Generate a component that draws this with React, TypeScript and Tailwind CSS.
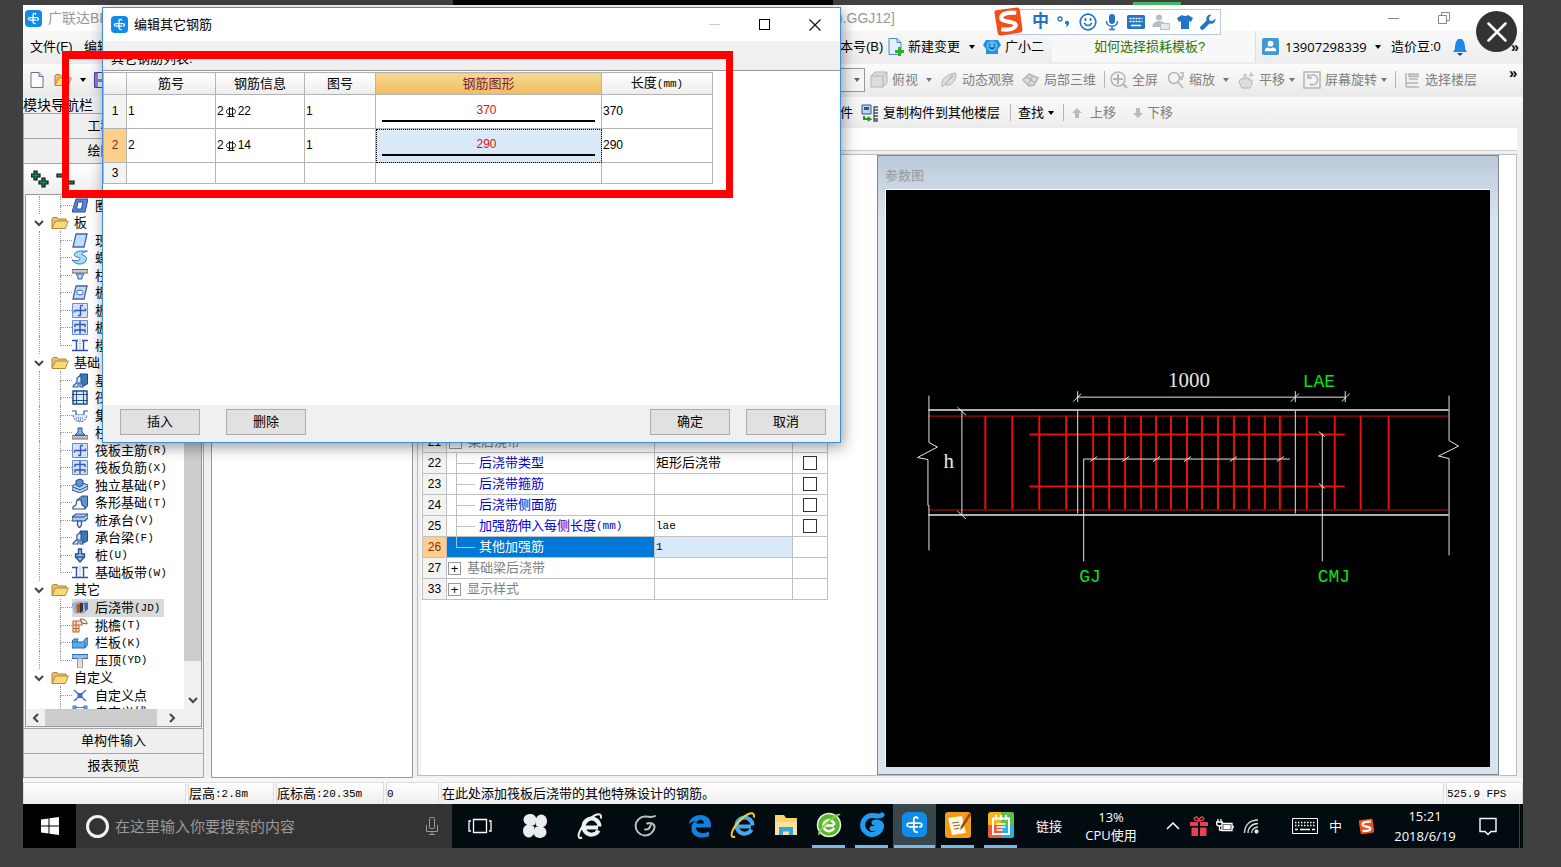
import type { ReactNode } from 'react';

type TreeNode = { label: string; hotkey?: string; icon?: string; group?: boolean; selected?: boolean };

const tree: TreeNode[] = [
  { label: '圈梁', hotkey: '(E)', icon: 'ring' },
  { label: '板', group: true },
  { label: '现浇板', hotkey: '(B)', icon: 'slab' },
  { label: '螺旋板', hotkey: '(B)', icon: 'spiral' },
  { label: '柱帽', hotkey: '(V)', icon: 'cap' },
  { label: '板洞', hotkey: '(N)', icon: 'hole' },
  { label: '板受力筋', hotkey: '(S)', icon: 'mainbar' },
  { label: '板负筋', hotkey: '(F)', icon: 'negbar' },
  { label: '楼层板带', hotkey: '(H)', icon: 'strip' },
  { label: '基础', group: true },
  { label: '基础梁', hotkey: '(F)', icon: 'beam' },
  { label: '筏板基础', hotkey: '(M)', icon: 'raft' },
  { label: '集水坑', hotkey: '(K)', icon: 'pit' },
  { label: '柱墩', hotkey: '(Y)', icon: 'pier' },
  { label: '筏板主筋', hotkey: '(R)', icon: 'mainbar' },
  { label: '筏板负筋', hotkey: '(X)', icon: 'negbar' },
  { label: '独立基础', hotkey: '(P)', icon: 'footing' },
  { label: '条形基础', hotkey: '(T)', icon: 'stripfoot' },
  { label: '桩承台', hotkey: '(V)', icon: 'pilecap' },
  { label: '承台梁', hotkey: '(F)', icon: 'beam' },
  { label: '桩', hotkey: '(U)', icon: 'pile' },
  { label: '基础板带', hotkey: '(W)', icon: 'strip' },
  { label: '其它', group: true },
  { label: '后浇带', hotkey: '(JD)', icon: 'pour', selected: true },
  { label: '挑檐', hotkey: '(T)', icon: 'eave' },
  { label: '栏板', hotkey: '(K)', icon: 'rail' },
  { label: '压顶', hotkey: '(YD)', icon: 'coping' },
  { label: '自定义', group: true },
  { label: '自定义点', icon: 'point' },
  { label: '自定义线', icon: 'line' },
];

const lastLeaf = [8, 21, 26];

const bars = [
  { id: 1, no: '1', size: '22', fig: '1', len: '370' },
  { id: 2, no: '2', size: '14', fig: '1', len: '290' },
];

const props = [
  { id: 22, name: '后浇带类型', value: '矩形后浇带' },
  { id: 23, name: '后浇带箍筋', value: '' },
  { id: 24, name: '后浇带侧面筋', value: '' },
  { id: 25, name: '加强筋伸入每侧长度', unit: '(mm)', value: 'lae' },
];

const stirrups = [985, 1012, 1039, 1066, 1093, 1109, 1125, 1141, 1156, 1171, 1187, 1202, 1218, 1234, 1249, 1265, 1280, 1307, 1335, 1361, 1389];

const mono = "font-['Liberation_Mono','Noto_Sans_CJK_SC',monospace] text-[11px]";

function GlodonIcon({ className = 'size-[17px]' }: { className?: string }) {
  return (
    <svg viewBox="0 0 18 18" className={className}>
      <rect width="18" height="18" rx="4" fill="#128be8" />
      <path d="M11.300 4.500C10.500 3 8.500 3.500 8.500 5.200v7c0 1.600 1 2.300 2.300 2.300M4.200 10.300c-1.200-1.300-.3-2.300 1.300-2.300h7c2.300 0 2.300 2.700.3 2.700M5.500 10.700h5.500" fill="none" stroke="#fff" strokeWidth="1.300" strokeLinecap="round" />
    </svg>
  );
}

function Folder() {
  return (
    <svg viewBox="0 0 18 14" className="h-[14px] w-[18px] shrink-0">
      <path d="M1 12V2.500L2 1.500h4l1.200 1.500H15V6" fill="#e9c36b" stroke="#a9853b" />
      <path d="M1 12.500 4.500 5H17.300l-3 7.500Z" fill="#fbd978" stroke="#b48a35" />
    </svg>
  );
}

function Leaf({ kind }: { kind: string }) {
  const shapes: Record<string, ReactNode> = {
    ring: <path fillRule="evenodd" d="M4 1h12l-3 13H0ZM6 4 4.500 11h5L11 4Z" fill="#5d84dc" stroke="#274a9c" />,
    slab: <path d="M4 1h11l-3 13H1Z" fill="#c3dcfb" stroke="#3f63b5" strokeWidth="1.300" />,
    spiral: <path d="M15.500 1H9C4 1 1 4 3 6s6 1 5 3-4 2-8 1c4 5 10 5 13 2s1-6-2-7-1-2 4.500-4Z" fill="#a6dcfa" stroke="#2c78c6" />,
    cap: <><path d="M0 1.500h16v3.500H0Z" fill="#ccc" stroke="#666" /><path d="M4 6h8l-2 3v2H6V9Z" fill="#b8d4fa" stroke="#2e5bb8" /></>,
    hole: <><path d="M4 1h11l-3 13H1Z" fill="#c3dcfb" stroke="#3f63b5" strokeWidth="1.300" /><ellipse cx="8" cy="7.500" rx="3.300" ry="2.400" fill="#eef6ff" stroke="#3f63b5" /></>,
    mainbar: <><path d="M.5.5h15v14H.5Z" fill="#d3e2fb" stroke="#6c8bd4" /><path d="M8.500 2.500v10H6M8.500 2.500H11M2.500 7.500h11V5.500M2.500 7.500v2" fill="none" stroke="#3458b4" strokeWidth="1.400" /></>,
    negbar: <><path d="M.5.5h15v14H.5Z" fill="#d3e2fb" stroke="#6c8bd4" /><path d="M8 1v13M3 7V4.500h10V7M3 12.500V10h10v2.500" fill="none" stroke="#3458b4" strokeWidth="1.400" /></>,
    strip: <><path d="M0 2.500h6M10 2.500h6M0 12.500h16" stroke="#2c50b0" strokeWidth="1.600" /><path d="M4.500 2.500v10M11.500 2.500v10" stroke="#3458b4" strokeWidth="1.500" /><path d="M8 1v12" stroke="#777" strokeDasharray="1 1" /></>,
    beam: <><path d="M8 1h7.500v10L9 14Z" fill="#3c79b4" stroke="#1f4c80" /><path d="M1 14c0-3 3-2 4-5V5l4-3v7l2 5H8v-4H6v4Z" fill="#dceafb" stroke="#2a5aa8" strokeWidth="1.200" /></>,
    raft: <><path d="M1 1h14v13H1Z" fill="#dceafb" stroke="#24508f" strokeWidth="1.500" /><path d="M4.500 4.500h7v6h-7ZM4.500 0v15M11.500 0v15M0 4.500h16M0 10.500h16" fill="none" stroke="#24508f" /></>,
    pit: <><path d="M0 3h4v4h8V3h4" fill="none" stroke="#3458b4" strokeWidth="1.200" /><path d="M1 7c1 9 13 9 14 0" fill="#dceafb" stroke="#3458b4" strokeDasharray="2 1" /><path d="M4 10h8M6 12h4" stroke="#3458b4" strokeDasharray="1 1" /></>,
    pier: <><path d="M0 10.500h16V14H0Z" fill="#bbb" stroke="#777" /><path d="M6 3h4v4l3 3H3l3-3Z" fill="#86b1ee" stroke="#24508f" /></>,
    footing: <><path d="M0 8 8 4l8 3v4l-8 4-8-3Z" fill="#b7d5f7" stroke="#24508f" /><path d="M4 2.500 8 1l3 1.500V7L7.500 9 4 7Z" fill="#5c93d6" stroke="#24508f" /><path d="m1 9 7 3 8-4" fill="none" stroke="#24508f" /></>,
    stripfoot: <><path d="M5 5 10 1h5.500v10L13 14Z" fill="#5d94cf" stroke="#24508f" /><path d="M1 14v-2l3-2 1-5h4l1 5 3 2v2Z" fill="#f4f9ff" stroke="#24508f" strokeWidth="1.200" /></>,
    pilecap: <><path d="m0 4 4-3h12v4l-3 3H0Z" fill="#a6c9f3" stroke="#24508f" strokeWidth="1.200" /><path d="M0 4h12l4-3" fill="none" stroke="#24508f" /><path d="M5.500 8h4v4l-2 3-2-3Z" fill="#dceafb" stroke="#24508f" strokeWidth="1.200" /></>,
    pile: <path d="M6.500 1h3v5h3v3l-4.500 5L3.500 9V6h3ZM3.500 9h9" fill="#9dc3ee" stroke="#24508f" strokeWidth="1.400" />,
    pour: <><path d="m0 4 6-2h10v7l-4 4H3Z" fill="#9db8dd" stroke="#7a94bd" strokeWidth=".6" /><path d="M4 5 8 3v9l-3 1Z" fill="#b35a28" /><path d="M8 3h3v8l-3 2Z" fill="#402c28" /><path d="M12 3h4v6l-3 2Z" fill="#4168ad" /></>,
    eave: <><path d="M1 3h9v4H7v7H1ZM1 7h6M1 10.500h6M4 3v11" fill="#fde1cc" stroke="#c06235" strokeWidth="1.100" /><path d="M8 1c4 0 7 1 7 5l-5-1Z" fill="#fbe9dd" stroke="#7a5a48" /></>,
    rail: <path d="M0 6 2 4h4l-1 3h6l3-4h2v6l-3 4H0ZM0 7h5M13 13V7" fill="#5eabe6" stroke="#206aae" />,
    coping: <><path d="M0 1.500h16v4H0Z" fill="#93bdf3" stroke="#3366b5" /><path d="M5.500 5.500h5V15h-5Z" fill="#ddd" stroke="#999" /></>,
    point: <><path d="m2 2 12 11M14 2 2 13" stroke="#3f6fc0" strokeWidth="1.400" /><path d="M5.500 5h5v5h-5Z" fill="#3f6fc0" /></>,
    line: <path d="M1 1h3v3H1ZM12 1h3v3h-3ZM4 2.500h8" fill="#8db5ec" stroke="#3f6fc0" />,
  };
  return <svg viewBox="0 0 16 15" className="h-[15px] w-4 shrink-0">{shapes[kind]}</svg>;
}

function Caret({ className = 'text-black' }: { className?: string }) {
  return (
    <svg viewBox="0 0 6 4" className={`h-1 w-1.5 shrink-0 ${className}`}>
      <path d="M0 0h6L3 4Z" fill="currentColor" />
    </svg>
  );
}

function Chevron({ dir }: { dir: 'down' | 'left' | 'right' }) {
  const d = { down: 'm1 3 4 4 4-4', left: 'M7 1 3 5l4 4', right: 'm3 1 4 4-4 4' }[dir];
  return (
    <svg viewBox="0 0 10 10" className="size-2.5 shrink-0">
      <path d={d} fill="none" stroke="#444" strokeWidth="2" />
    </svg>
  );
}

function SogouIcon({ className }: { className: string }) {
  return (
    <svg viewBox="0 0 30 30" className={className}>
      <path d="M3 4Q1 4 1.500 7l3 19q.5 3 3 2.500l18-2.500q3-.5 3-3L26 4q-.5-3-3-2.500Z" fill="#f04f1b" />
      <path d="M22.500 6.500C12 6 8 8 8 11.500c0 4.500 14 3 14 7 0 3.500-7 5-14 4" fill="none" stroke="#fff" strokeWidth="4" />
    </svg>
  );
}

type ToolProps = { label: string; width: string; icon: ReactNode; caret?: boolean };

function Tool({ label, width, icon, caret }: ToolProps) {
  return (
    <button className={`flex shrink-0 items-center gap-1 whitespace-nowrap text-[#808080] ${width}`}>
      <svg viewBox="0 0 18 18" className="size-[18px] shrink-0" fill="#ddd" stroke="#b5b5b5">{icon}</svg>
      {label}
      {caret && <span className="ml-auto pr-2"><Caret className="text-[#777]" /></span>}
    </button>
  );
}

const Divider = () => <span className="h-[17px] w-px shrink-0 bg-[#b5b5b5]" />;

function ImeBar() {
  return (
    <div className="absolute top-1 left-[979px] z-10 flex h-[26px] w-[219px] items-center justify-end gap-[7px] border border-[#b9c7e0] bg-white pr-1 text-[#2274c4]">
      <SogouIcon className="absolute -top-1 -left-2.5 size-[31px]" />
      <span className="text-[17px] font-bold">中</span>
      <svg viewBox="0 0 16 16" className="size-4" fill="currentColor">
        <circle cx="4" cy="5" r="2" fill="none" stroke="currentColor" strokeWidth="1.300" />
        <path d="M9 8.500a2 2 0 1 1 4 .5q0 3-3.500 4 1.500-1.500 1-2.500Q9 10.500 9 8.500Z" />
      </svg>
      <svg viewBox="0 0 18 18" className="size-[18px]" fill="none" stroke="currentColor" strokeWidth="1.700">
        <circle cx="9" cy="9" r="7.800" />
        <path d="M5 10q4 5 8 0M6.500 5v3M11.500 5v3" />
      </svg>
      <svg viewBox="0 0 16 18" className="h-[18px] w-4">
        <rect x="5" y="1" width="6" height="10" rx="3" fill="currentColor" />
        <path d="M2.500 8c0 7 11 7 11 0M8 13v3.500M5 16.500h6" fill="none" stroke="currentColor" strokeWidth="1.500" />
      </svg>
      <svg viewBox="0 0 18 14" className="h-3.5 w-[18px]">
        <rect width="18" height="14" rx="1.500" fill="currentColor" />
        <path d="M2.500 3.500h13M2.500 6.500h13" stroke="#fff" strokeWidth="1.600" strokeDasharray="2 1" />
        <path d="M4 10.500h10" stroke="#fff" strokeWidth="1.600" />
      </svg>
      <svg viewBox="0 0 18 16" className="h-4 w-[18px]">
        <circle cx="7" cy="3.500" r="3" fill="#b3bcc9" />
        <path d="M0 13q1-6 7-6 4 0 5 2H8v4Z" fill="#b3bcc9" />
        <path d="M8.500 9.500h9v6h-9Z" fill="#e6eaf0" stroke="#b3bcc9" />
      </svg>
      <svg viewBox="0 0 16 16" className="size-4" fill="currentColor">
        <path d="M5 1q3 2 6 0l5 3-2 4-2-1v8H4V7L2 8 0 4Z" />
      </svg>
      <svg viewBox="0 0 16 16" className="size-4" fill="currentColor">
        <path d="M15.500 4.500 12.500 7 9.500 6.500 9 3.500 11.500.5C8 0 5.500 3 6.500 6.500L.8 12.200a1.900 1.900 0 0 0 3 3L9.500 9.500c3.500 1 6.500-1.500 6-5Z" />
      </svg>
    </div>
  );
}

function Sidebar() {
  const wide = 'h-[25px] w-full border-b border-[#a5a5a5] bg-[#efefef] text-center';
  return (
    <aside className="flex w-[181px] shrink-0 flex-col bg-[#f0f0f0]">
      <h2 className="h-4 text-[14px] leading-4">模块导航栏</h2>
      <div className="flex min-h-0 flex-1 flex-col border border-[#a5a5a5]">
        <button className={wide}>工程设置</button>
        <button className={wide}>绘图输入</button>
        <div className="flex h-[30px] items-center bg-linear-to-b from-white to-[#eee] pl-[7px]">
          <svg viewBox="0 0 44 18" className="h-[18px] w-11">
            <path d="M0 4h3V1h3v3h3v3H6v3H3V7H0ZM8 11h3V8h3v3h3v3h-3v3h-3v-3H8ZM26 4h8v3h-8ZM34 11h9v3h-9Z" fill="#0b8a62" stroke="#111" strokeWidth="1.200" />
          </svg>
        </div>
        <div className="mx-px flex min-h-0 flex-1 flex-col border border-[#999] bg-white">
          <div className="flex min-h-0 flex-1">
            <ul className="min-w-0 flex-1 overflow-hidden pt-px">
              {tree.map((node, i) => (
                <li key={i} className="flex h-[18px] items-center whitespace-nowrap even:h-[17px]">
                  {node.group ? (
                    <button className="flex items-center pl-2">
                      <Chevron dir="down" />
                      <span className="w-[7px]" />
                      <Folder />
                      <span className="pl-[5px]">{node.label}</span>
                    </button>
                  ) : (
                    <>
                      <span className={`ml-[13px] w-[21px] shrink-0 self-stretch ${i < 27 ? 'border-l border-dotted border-[#999]' : ''}`} />
                      <span className="flex w-3 shrink-0 flex-col self-stretch">
                        <span className="flex-1 border-b border-l border-dotted border-[#999]" />
                        <span className={`flex-1 ${lastLeaf.includes(i) ? '' : 'border-l border-dotted border-[#999]'}`} />
                      </span>
                      <button className={`flex items-center pr-1 ${node.selected ? 'bg-[#d9d9d9]' : ''}`}>
                        <Leaf kind={node.icon!} />
                        <span className="pl-[7px] leading-[17px]">{node.label}</span>
                        <span className={mono}>{node.hotkey}</span>
                      </button>
                    </>
                  )}
                </li>
              ))}
            </ul>
            <div className="flex w-[17px] flex-col items-center bg-[#f0f0f0]">
              <span className="h-[466px] w-full bg-[#cdcdcd]" />
              <span className="mt-auto pb-1"><Chevron dir="down" /></span>
            </div>
          </div>
          <div className="flex h-[17px] items-center bg-[#f0f0f0] pl-[5px]">
            <Chevron dir="left" />
            <span className="mr-2.5 ml-1 h-full w-28 bg-[#cdcdcd]" />
            <Chevron dir="right" />
          </div>
        </div>
        <div className="h-0.5 border-b border-[#a5a5a5]" />
        <button className={wide}>单构件输入</button>
        <button className="h-[23px] bg-[#efefef]">报表预览</button>
      </div>
    </aside>
  );
}

function PropertyTable() {
  const cell = 'border border-[#c0c0c0] p-0';
  return (
    <table className="w-[406px] table-fixed border-collapse leading-5">
      <colgroup>
        <col className="w-6" />
        <col />
        <col className="w-[138px]" />
        <col className="w-[35px]" />
      </colgroup>
      <tbody>
        <tr className="h-[21px] text-[#808080]">
          <td className={`${cell} bg-[#f3f3f3] text-center text-[12px] text-black`}>21</td>
          <td className={cell}>
            <span className="flex items-center gap-1.5 pl-0.5"><span className="size-[13px] border border-[#999] text-center text-[13px] leading-[11px]">−</span>梁后浇带</span>
          </td>
          <td className={cell} />
          <td className={cell} />
        </tr>
        {props.map((p) => (
          <tr key={p.id} className="h-[21px]">
            <td className={`${cell} bg-[#f3f3f3] text-center text-[12px]`}>{p.id}</td>
            <td className={`${cell} whitespace-nowrap text-[#0000d0]`}>
              <label htmlFor={`p${p.id}`} className="flex h-5 items-center pl-[9px]">
                <span className="h-full w-0 border-l border-[#c0c0c0]" />
                <span className="mr-1 h-px w-[18px] bg-[#c0c0c0]" />
                {p.name}
                <span className={mono}>{p.unit}</span>
              </label>
            </td>
            <td className={`${cell} pl-px ${p.value === 'lae' ? mono : ''}`}>{p.value}</td>
            <td className={`${cell} text-center`}>
              <input id={`p${p.id}`} type="checkbox" className="mx-auto block size-3.5 appearance-none border border-[#333] bg-white" />
            </td>
          </tr>
        ))}
        <tr className="h-[21px]">
          <td className={`${cell} bg-[#fdcf8b] text-center text-[12px] text-[#8a2a1a]`}>26</td>
          <td className={`${cell} bg-[#0078d7] text-white`}>
            <span className="flex h-5 items-center pl-[9px]">
              <span className="mr-1 h-[11px] w-[19px] self-start border-b border-l border-[#9cc9ee]" />
              其他加强筋
            </span>
          </td>
          <td className={`${cell} bg-[#d9e9f7] pl-px ${mono}`}>1</td>
          <td className={cell} />
        </tr>
        {[{ id: 27, name: '基础梁后浇带' }, { id: 33, name: '显示样式' }].map((g) => (
          <tr key={g.id} className="h-[21px] text-[#808080]">
            <td className={`${cell} bg-[#f3f3f3] text-center text-[12px] text-black`}>{g.id}</td>
            <td className={cell}>
              <span className="flex h-5 items-center gap-1.5 pl-px">
                <button className="size-[13px] border border-[#999] text-center text-[13px] leading-[11px] text-black">+</button>
                {g.name}
              </span>
            </td>
            <td className={cell} />
            <td className={cell} />
          </tr>
        ))}
      </tbody>
    </table>
  );
}

function RebarDrawing() {
  return (
    <svg viewBox="887 189 602 578" className="min-h-0 w-full flex-1 border-t border-l border-white bg-black" fill="none">
      <g stroke="#e8100c" strokeWidth="2">
        {stirrups.map((x) => <path key={x} d={`M${x} 415V509`} />)}
        <path d="M1029 434H1345M1029 486H1345" />
        <path d="M928 415.500H1449M928 509.500H1449" stroke="#c80e0a" strokeWidth="1" />
      </g>
      <g stroke="#e6e6e6" strokeWidth="1">
        <path d="M928 409.500H1449M928 514.500H1449" strokeWidth="1.500" />
        <path d="M928.500 395V442L937 446.500 917 457 927.500 459V505H928.500V550" />
        <path d="M1449.500 395V440L1459 445.500 1439 455.500 1449.500 458V555" />
        <path d="M961.500 410V514M957 406.500l8.500 8M957 510.500l8.500 8" />
        <path d="M1077.500 410V513M1295.500 410V513" />
        <path d="M1077 396.500H1346M1077.500 390.500v11M1295.500 390.500v11M1345.500 390.500v11M1073 401l8-8M1291 401l8-8M1342 401l8-8" />
        <path d="M1083.500 561V458.500H1290" />
        {[1093, 1125, 1156, 1187, 1233, 1280].map((x) => <path key={x} d={`M${x - 3} 461l7-5`} />)}
        <path d="M1322.500 433V561M1319 431l6 5M1319 483l6 5" />
      </g>
      <g fill="#e6e6e6" className="font-['Liberation_Serif',serif] text-[21px]">
        <text x="1168" y="386">1000</text>
        <text x="943" y="467">h</text>
      </g>
      <g fill="#0ce01c" className="font-['Liberation_Mono',monospace] text-[18px]">
        <text x="1303" y="386">LAE</text>
        <text x="1079" y="582">GJ</text>
        <text x="1318" y="582">CMJ</text>
      </g>
    </svg>
  );
}

function RebarDialog() {
  const cell = 'border border-[#b4b4b4] px-px py-0';
  const head = 'border border-[#b4b4b4] bg-linear-to-b from-white to-[#ececec] p-0 font-normal';
  const btn = 'h-[26px] w-20 border border-[#adadad] bg-[#e1e1e1]';
  return (
    <section role="dialog" aria-label="编辑其它钢筋" className="absolute top-0.5 left-[79px] z-20 flex w-[739px] flex-col border border-[#3c8fdc] bg-white shadow-[2px_4px_14px_rgba(0,0,0,0.4)]">
      <header className="flex h-[33px] items-center pl-2">
        <GlodonIcon />
        <span className="pl-1.5">编辑其它钢筋</span>
        <div className="ml-auto flex items-center gap-[39px] pr-[19px]">
          <button aria-label="最小化" className="h-px w-[11px] bg-[#ccc]" />
          <button aria-label="最大化" className="size-[11px] border border-black" />
          <button aria-label="关闭">
            <svg viewBox="0 0 12 12" className="size-3"><path d="m.5.5 11 11M11.500.5l-11 11" stroke="#111" strokeWidth="1.200" /></svg>
          </button>
        </div>
      </header>
      <h3 className="h-[30px] border-b border-[#999] bg-[#f0f0f0] pt-[9px] pl-2 leading-[18px]">其它钢筋列表:</h3>
      <div className="h-[334px] pt-px">
        <table className="w-[610px] table-fixed border-collapse leading-[19px]">
          <colgroup>
            <col className="w-[23px]" />
            <col className="w-[89px]" />
            <col className="w-[89px]" />
            <col className="w-[71px]" />
            <col />
            <col className="w-[111px]" />
          </colgroup>
          <thead>
            <tr className="h-[21px]">
              <th className={head} />
              <th className={head}>筋号</th>
              <th className={head}>钢筋信息</th>
              <th className={head}>图号</th>
              <th className="border border-[#b4b4b4] bg-linear-to-b from-[#f8d790] to-[#efbd60] p-0 font-normal text-[#7a1f3a]">钢筋图形</th>
              <th className={head}>长度<span className={mono}>(mm)</span></th>
            </tr>
          </thead>
          <tbody className="text-[12px]">
            {bars.map((b) => (
              <tr key={b.id} className="h-[34px]">
                <td className={`border border-[#b4b4b4] p-0 text-center ${b.id === 2 ? 'bg-[#fdcf8b] text-[#8a2a1a]' : 'bg-[#f3f3f3]'}`}>{b.id}</td>
                <td className={cell}>{b.no}</td>
                <td className={cell}>
                  <span className="flex items-center">
                    2
                    <svg viewBox="0 0 14 12" className="h-3 w-3.5"><path d="M5.500 1v10M8.500 1v10M3.500 10.500h7" stroke="#111" /><ellipse cx="7" cy="5.500" rx="4.500" ry="2.800" fill="none" stroke="#111" /></svg>
                    {b.size}
                  </span>
                </td>
                <td className={cell}>{b.fig}</td>
                <td className={`border border-[#b4b4b4] p-0 ${b.id === 2 ? 'bg-[#d9e9f7] outline-1 -outline-offset-1 outline-dotted outline-black' : ''}`}>
                  <div className="mx-1.5 border-b-2 border-black pr-1 text-center text-[#e01020]">{b.len}</div>
                </td>
                <td className={cell}>{b.len}</td>
              </tr>
            ))}
            <tr className="h-[21px]">
              <td className="border border-[#b4b4b4] bg-[#f3f3f3] p-0 text-center">3</td>
              <td className={cell} />
              <td className={cell} />
              <td className={cell} />
              <td className={cell} />
              <td className={cell} />
            </tr>
          </tbody>
        </table>
      </div>
      <footer className="flex h-[37px] items-center bg-[#f0f0f0] pr-3.5 pb-1 pl-[17px]">
        <button className={btn}>插入</button>
        <button className={`${btn} ml-[26px]`}>删除</button>
        <button className={`${btn} mr-4 ml-auto`}>确定</button>
        <button className={btn}>取消</button>
      </footer>
    </section>
  );
}

function IeGlyph({ color, ring }: { color: string; ring?: string }) {
  return (
    <svg viewBox="0 0 28 28" className="size-7">
      <path d="M8 15.500h14M22.500 18.500a8 8 0 1 1 1-4" fill="none" stroke={color} strokeWidth="4" />
      {ring && <path d="M6 25.500C0 28 2 19 10 10.500S26-1 25 6.500" fill="none" stroke={ring} strokeWidth="2" />}
    </svg>
  );
}

function Swirl({ color, width }: { color: string; width: number }) {
  return (
    <svg viewBox="0 0 28 28" className="size-7" fill="none" stroke={color} strokeWidth={width} strokeLinecap="round">
      <path d="M24 4c-3 2-6 .5-10 .5a9.500 9.500 0 1 0 9.500 11C24 12 20 10 16 11.500M20 12c-1 5-3 6-6 5.500" />
    </svg>
  );
}

const taskIcons: { name: string; running?: boolean; active?: boolean; icon: ReactNode }[] = [
  { name: 'Edge', icon: <svg viewBox="0 0 28 28" className="size-7"><path d="M3 13C5 1 25 1 25 14v2.500H10c0 6 8 7 13 4v4.500C14 29 5 25 5.500 17c0-4 2-6 5-7-3 0-5.500 1-7.500 3Zm7.500-.5H18c0-5-7-5-7.500 0Z" fill="#1580db" /></svg> },
  { name: 'Internet Explorer', icon: <IeGlyph color="#4aa6ec" ring="#f5cf2c" /> },
  { name: '文件资源管理器', icon: <svg viewBox="0 0 28 28" className="size-7"><path d="M3 4h9l2 3h11v17H3Z" fill="#f9d36c" /><path d="M3 11h22v13H3Z" fill="#fce39c" /><path d="M7 24v-8h14v8h-4v-3.500h-6V24Z" fill="#35a5dc" /></svg> },
  { name: '360浏览器', running: true, icon: <svg viewBox="0 0 28 28" className="size-7"><circle cx="14" cy="14" r="11.500" fill="#59b82e" stroke="#e9f6e0" strokeWidth="1.500" /><path d="M9 14.500h10M19 17a5.500 5.500 0 1 1 .5-3" fill="none" stroke="#fff" strokeWidth="2.500" /><path d="M4 24C2 20 22 1 25 4" fill="none" stroke="#7ed14c" strokeWidth="2" /></svg> },
  { name: '广联达G+', running: true, icon: <Swirl color="#1f9df1" width={5} /> },
  { name: '钢筋算量', running: true, active: true, icon: <GlodonIcon className="size-[25px]" /> },
  { name: '便签', running: true, icon: <svg viewBox="0 0 28 28" className="size-7"><rect x="1" y="1" width="26" height="26" rx="3" fill="#f49a16" /><path d="m4 7 14-2 4 17-14 2Z" fill="#fff8e2" /><path d="m8 12 7-1M9 15l7-1M10 18l5-.7" stroke="#8c6a3a" strokeWidth="1.200" /><path d="m25 2-8 13-1 4 3-2.500L27 4Z" fill="#a14a10" /></svg> },
  { name: '记事', running: true, icon: <svg viewBox="0 0 28 28" className="size-7"><rect x="1" y="1" width="26" height="26" rx="3" fill="#f8b51c" /><path d="M14 1h10q3 0 3 3v10H14Z" fill="#5cc04a" /><path d="M14 14h13v10q0 3-3 3H14Z" fill="#2eaede" /><path d="M1 14h13v13H4q-3 0-3-3Z" fill="#ee5a3a" /><path d="M6 7.500h16V23H6ZM9 4v5M14 4v5M19 4v5" fill="none" stroke="#fff" strokeWidth="2" /><path d="M9.500 13h9M9.500 16h9M9.500 19h6" stroke="#fff" strokeWidth="1.500" /></svg> },
];

function Taskbar() {
  const pinned = 'flex w-[55px] shrink-0 items-center justify-center';
  const tray = 'flex w-[26px] shrink-0 items-center justify-center';
  return (
    <nav className="flex h-11 shrink-0 bg-[#020b0f] font-['Open_Sans','Noto_Sans_CJK_SC',sans-serif] text-[13px] text-white">
      <button aria-label="开始" className="flex w-[53px] shrink-0 items-center justify-center bg-black">
        <svg viewBox="0 0 18 18" className="size-[18px]" fill="#fff"><path d="M0 2.500 7.500 1.500v7H0ZM8.500 1.300 18 0v8.500H8.500ZM0 9.500h7.500v7L0 15.500ZM8.500 9.500H18V18l-9.500-1.300Z" /></svg>
      </button>
      <label className="flex w-[376px] shrink-0 items-center bg-[#333] pr-[13px] pl-[9px]">
        <svg viewBox="0 0 25 25" className="size-[25px] shrink-0"><circle cx="12.500" cy="12.500" r="10" fill="none" stroke="#f2f2f2" strokeWidth="3" /></svg>
        <input aria-label="搜索" placeholder="在这里输入你要搜索的内容" className="min-w-0 flex-1 bg-transparent pl-[5px] text-[15px] outline-none placeholder:text-[#999]" />
        <svg viewBox="0 0 14 20" className="h-5 w-3.5" fill="none" stroke="#999"><rect x="4.500" y="1.500" width="5" height="11" rx="1" /><path d="M1.500 9v6.500h11V9M7 15.500v3M4 18.500h6" /></svg>
      </label>
      <button aria-label="任务视图" className={pinned}>
        <svg viewBox="0 0 24 18" className="h-[18px] w-6" fill="none" stroke="#fff" strokeWidth="1.300"><path d="M5.500 2.500h13v13h-13ZM3 4H1v10h2M21 4h2v10h-2" /></svg>
      </button>
      <button aria-label="风车" className={pinned}>
        <svg viewBox="0 0 28 28" className="size-7" fill="#e9eded">
          {[0, 90, 180, 270].map((a) => <path key={a} transform={`rotate(${a} 14 14)`} d="M13.500 13C10 14.500 3 13.500 2.500 8 2.500 3 8 1 12 2.500c4 2 4 6 1.500 10.500Z" />)}
        </svg>
      </button>
      <button aria-label="浏览器" className={pinned}><IeGlyph color="#eef0f0" ring="#eef0f0" /></button>
      <button aria-label="广材助手" className={pinned}><Swirl color="#b9c0c2" width={2} /></button>
      <div className="flex shrink-0 pl-1.5">
        {taskIcons.map((t) => (
          <button key={t.name} aria-label={t.name} className={`flex w-[43px] flex-col items-center px-px ${t.active ? 'bg-[#39474a]' : ''}`}>
            <span className="flex flex-1 items-center">{t.icon}</span>
            <span className={`h-[3px] ${t.active ? 'w-full' : 'w-[33px]'} ${t.running ? 'bg-[#7ab8f0]' : ''}`} />
          </button>
        ))}
      </div>
      <span className="shrink-0 self-center pl-3.5 whitespace-nowrap">链接</span>
      <p className="w-[98px] shrink-0 self-center text-center leading-[18px]">13%<br />CPU使用</p>
      <div className="ml-auto flex">
        <span className={tray}><svg viewBox="0 0 14 8" className="h-2 w-3.5"><path d="m1 7 6-6 6 6" fill="none" stroke="#fff" strokeWidth="1.500" /></svg></span>
        <span className={tray}><svg viewBox="0 0 18 20" className="h-5 w-[18px]" fill="#ee3f52"><path d="M0 6h8v4H0ZM10 6h8v4h-8ZM1.500 11.500H8V20H1.500ZM10 11.500h6.500V20H10Z" /><path d="M9 5C5 5 3 3 5 1.500S9 3 9 5c0-2 2-5 4-3.500S13 5 9 5Z" fill="none" stroke="#ee3f52" strokeWidth="1.500" /></svg></span>
        <span className={tray}><svg viewBox="0 0 18 14" className="h-3.5 w-[18px]" fill="none" stroke="#fff" strokeWidth="1.300"><path d="M6 4.500h10v7H6ZM17 6.500v3M2 0v3M5 0v3M.7 3h5.500v2q0 2-2.700 2T.7 5ZM3.500 7v4H6" /><path d="M8 6.500h6v3H8Z" fill="#fff" /></svg></span>
        <span className={tray}><svg viewBox="0 0 16 16" className="size-4" fill="none" stroke="#ddd" strokeWidth="1.300"><path d="M1.500 15C1.500 7 7 2 15 2M5 15C5 9.500 9 5.500 15 5.500M8.500 15c0-3.500 3-6 6.500-6" /><circle cx="13.500" cy="13.500" r="1.500" fill="#fff" /></svg></span>
        <span className="ml-7 flex w-[26px] shrink-0 items-center"><svg viewBox="0 0 26 16" className="h-4 w-[26px]" fill="none" stroke="#fff"><path d="M.5.5h25v15H.5Z" /><path d="M3 4.500h20M3 7.500h20" strokeWidth="1.500" strokeDasharray="1.500 1.500" /><path d="M3 11.500h3M8 11.500h10M20 11.500h3" strokeWidth="1.500" /></svg></span>
        <span className="w-[35px] shrink-0 self-center text-center">中</span>
        <span className="flex w-[27px] shrink-0 items-center justify-center"><SogouIcon className="size-[17px]" /></span>
        <time className="w-[90px] shrink-0 self-center text-center leading-5">15:21<br />2018/6/19</time>
        <button aria-label="通知" className="flex w-[35px] shrink-0 items-center justify-center"><svg viewBox="0 0 18 20" className="h-5 w-[18px]"><path d="M1 2.500h16v13h-5L9 18.500 6 15.500H1Z" fill="none" stroke="#fff" strokeWidth="1.400" /></svg></button>
        <span className="mr-1 ml-[14px] w-px bg-[#444]" />
      </div>
    </nav>
  );
}

export default function App() {
  const status = 'flex h-[22px] items-center border border-b-0 border-[#dcdcdc] bg-linear-to-b from-white to-[#eee] whitespace-nowrap';
  return (
    <div className="flex h-screen flex-col overflow-hidden bg-[#404040] pr-[38px] pb-[19px] pl-[23px] font-['Liberation_Sans','Noto_Sans_CJK_SC',sans-serif] text-[13px] leading-[18px] text-black">
      <div className="flex h-[5px] shrink-0">
        <span className="ml-[430px] w-[380px] bg-black" />
        <span className="ml-[300px] w-12 border-t-2 border-[#404040] bg-[#43b85c]" />
      </div>
      <div className="relative flex min-h-0 flex-1 flex-col bg-[#f0f0f0]">
        <header className="flex h-[26px] shrink-0 items-center bg-white pl-0.5 text-[#999]">
          <GlodonIcon />
          <span className="w-[796px] shrink-0 pl-1.5 text-[14px]">广联达BIM</span>
          <span className="text-[14px]">).GGJ12]</span>
          <button aria-label="最小化" className="ml-auto h-px w-[11px] bg-[#888]" />
          <button aria-label="还原" className="mr-[73px] ml-[39px]">
            <svg viewBox="0 0 12 12" className="size-3" fill="none" stroke="#888"><path d="M.5 3.500h8v8h-8ZM3.500 3V.5h8v8H9" /></svg>
          </button>
        </header>

        <div className="flex h-[33px] shrink-0 items-center bg-linear-to-b from-[#f8f8f8] to-[#ececec] pb-0.5 pl-[7px] whitespace-nowrap">
          <button className="w-[54px] text-left">文件(F)</button>
          <button className="w-[743px] text-left">编辑(E)</button>
          <button className="w-[61px] text-left">版本号(B)</button>
          <button className="flex w-[95px] items-center gap-1">
            <svg viewBox="0 0 16 18" className="h-[18px] w-4"><path d="M1 .5h8l4 4v12H1Z" fill="#e2f0fc" stroke="#4d87c0" /><path d="M9 .5v4h4" fill="none" stroke="#4d87c0" /><path d="M10 9h3v3h3v3h-3v3h-3v-3H7v-3h3Z" fill="#2fae2f" /></svg>
            新建变更
            <span className="ml-auto pr-2"><Caret /></span>
          </button>
          <button className="flex w-[69px] items-center gap-1">
            <svg viewBox="0 0 18 18" className="size-[18px]"><path d="M3 2h12l3 5-3 4v5H3v-5L0 7Z" fill="#1f8fe0" /><circle cx="9" cy="8" r="5.500" fill="#56b8f5" /><path d="M6 9q3 3 6 0M6.500 6v1.500M11.500 6v1.500" fill="none" stroke="#064b85" strokeWidth="1.200" /></svg>
            广小二
          </button>
          <a href="#loss" className="flex h-full flex-1 items-center border-r border-[#ddd] bg-[#f8f8f8] pl-[42px] text-[#2d7203]">如何选择损耗模板?</a>
          <button className="flex w-[135px] items-center gap-1.5 pl-1.5 font-['Open_Sans',sans-serif]">
            <svg viewBox="0 0 18 18" className="size-[17px] shrink-0"><rect width="18" height="18" rx="2" fill="#3d9ad2" /><circle cx="9" cy="6" r="3" fill="#fff" /><path d="M3 14q0-4 3.500-4L9 11l2.500-1q3.500 0 3.500 4Z" fill="#fff" /></svg>
            13907298339
            <span className="pl-0.5"><Caret /></span>
          </button>
          <span className="w-[62px]">造价豆:0</span>
          <button aria-label="消息" className="mr-11">
            <svg viewBox="0 0 14 18" className="h-[18px] w-3.5"><path d="M5 1h4q3 3 3 7v3l2 3H0l2-3V8q0-4 3-7Z" fill="#1f86ee" /><path d="M4 15h6l-3 3Z" fill="#174b84" /></svg>
          </button>
          <span className="w-3 text-[14px] font-bold">»</span>
        </div>

        <div className="flex h-[33px] shrink-0 items-center bg-linear-to-b from-[#fcfcfc] to-[#e9e9e9] pb-0.5 pl-[7px]">
          <button aria-label="新建" className="w-6 shrink-0"><svg viewBox="0 0 14 16" className="h-4 w-3.5"><path d="M1 .5h8l4 4v11H1Z" fill="#fff" stroke="#5d7696" /><path d="M9 .5v4h4" fill="#cde" stroke="#5d7696" /></svg></button>
          <button aria-label="打开" className="flex w-10 shrink-0 items-center justify-between pr-2"><Folder /><Caret /></button>
          <button aria-label="保存" className="w-[745px] shrink-0"><svg viewBox="0 0 16 16" className="size-4"><path d="M.5.5h15v15H.5Z" fill="#8a7fd6" stroke="#4a3fa0" /><path d="M4 1h8v6H4ZM4 10h8v5H4Z" fill="#eee" /></svg></button>
          <button className="flex h-6 w-[26px] shrink-0 items-center justify-end border border-[#999] bg-[#f5f5f5] pr-1"><Caret className="text-[#666]" /></button>
          <div className="flex items-center pl-[5px]">
            <Tool label="俯视" width="w-[70px]" caret icon={<path d="M1 5 5 1h12v11l-4 4H1ZM1 5h12v11M13 5l4-4" />} />
            <Tool label="动态观察" width="w-[82px]" icon={<path d="M2 15C0 9 8 2 16 2c0 8-4 13-11 12M2 16 14 4M6 13l6-9" />} />
            <Tool label="局部三维" width="w-[82px]" icon={<path d="m1 9 6-6 4 2 5 2-4 7-5 1Zm4-3 8 6M11 4 6 14" strokeWidth="1.500" />} />
            <Divider />
            <span className="w-[5px] shrink-0" />
            <Tool label="全屏" width="w-[57px]" icon={<><circle cx="8" cy="8" r="7" fill="none" strokeWidth="1.500" /><path d="M8 3v10M3 8h10M13 13l4 4" strokeWidth="2" /></>} />
            <Tool label="缩放" width="w-[70px]" caret icon={<><circle cx="7" cy="7" r="5.500" fill="none" strokeWidth="1.500" /><path d="m11 11 5 6M13 2h3v4h-3M12 8h4" fill="none" strokeWidth="1.500" /></>} />
            <Tool label="平移" width="w-[66px]" caret icon={<path d="M3 9 5 7l2 2V4l2-1v5l1-1h2v2h3v4l-2 4H5L2 11ZM12 4h5M14 1v5" />} />
            <Tool label="屏幕旋转" width="w-[92px]" caret icon={<path d="M1 1h16v16H1ZM5 7a5 5 0 1 1 2 6M5 3v4h4" fill="none" strokeWidth="1.500" />} />
            <Divider />
            <span className="w-[7px] shrink-0" />
            <Tool label="选择楼层" width="w-20" icon={<path d="M6 3h9v2.500H6ZM6 8h9M3 12h12M3 16h13M3 2v14" strokeWidth="1.500" />} />
          </div>
          <span className="ml-auto w-3.5 self-start text-[15px] font-bold">»</span>
        </div>

        <div className="flex min-h-0 flex-1">
          <Sidebar />
          <main className="flex min-w-0 flex-1 flex-col">
            <div className="flex h-[31px] shrink-0 items-center bg-linear-to-b from-[#fafafa] to-[#ececec] pl-[636px] whitespace-nowrap">
              <button className="w-[21px] text-left">件</button>
              <button className="flex w-[149px] items-center gap-1">
                <svg viewBox="0 0 18 18" className="size-[18px] shrink-0"><path d="M1 1h9v9H1Z" fill="#bcd3f2" stroke="#31568c" /><path d="M3 3h5v3H3Z" fill="#31568c" /><path d="M17 3h-4v14h4M13 6h4M13 9h4M13 12h4M13 15h4" fill="none" stroke="#454f66" strokeWidth="1.300" /><path d="M3 12v3h6l-2-2M9 15l-2 2" fill="none" stroke="#1aa01a" strokeWidth="2" /></svg>
                复制构件到其他楼层
              </button>
              <Divider />
              <button className="flex w-[52px] items-center gap-1 pl-[7px]">查找<Caret /></button>
              <Divider />
              <button className="flex w-[69px] items-center gap-2 pl-2 text-[#808080]"><svg viewBox="0 0 10 10" className="size-2.5" fill="#bbb"><path d="m5 0 5 5H7v5H3V5H0Z" /></svg>上移</button>
              <button className="flex items-center gap-1 text-[#808080]"><svg viewBox="0 0 10 10" className="size-2.5" fill="#bbb"><path d="m5 10 5-5H7V0H3v5H0Z" /></svg>下移</button>
            </div>
            <div className="mr-1.5 h-[23px] shrink-0 border-b border-[#ccc] bg-white" />
            <div className="mt-[3px] mr-1.5 flex min-h-0 flex-1 pl-[7px]">
              <div className="mr-1 w-[202px] shrink-0 border border-[#999] bg-white" />
              <div className="mb-0.5 flex min-w-0 flex-1 border border-[#bbb] bg-white">
                <div className="w-[459px] shrink-0 overflow-hidden border-l-[3px] border-[#f0f0f0] pt-[276px] pl-px">
                  <PropertyTable />
                </div>
                <section className="flex min-w-0 flex-1 flex-col border border-[#80868f] bg-linear-to-b from-[#bccad9] via-[#d8e3ef] via-10% to-[#d8e3ef] pr-2 pb-[7px] pl-[7px]">
                  <h2 className="h-[33px] shrink-0 pt-[11px] text-[#999]">参数图</h2>
                  <RebarDrawing />
                </section>
                <div className="w-[17px] bg-white" />
              </div>
            </div>
          </main>
        </div>

        <div className="flex h-[26px] shrink-0 items-end gap-0.5 bg-[#f6f6f6]">
          <span className={`${status} w-[163px]`} />
          <span className={`${status} w-[86px]`}>层高<span className={mono}>:2.8m</span></span>
          <span className={`${status} w-[108px]`}>底标高<span className={mono}>:20.35m</span></span>
          <span className={`${status} w-[53px]`}><span className={mono}>0</span></span>
          <span className={`${status} flex-1`}>在此处添加筏板后浇带的其他特殊设计的钢筋。</span>
          <span className={`${status} w-[77px]`}><span className={mono}>525.9 FPS</span></span>
        </div>
        <Taskbar />

        <ImeBar />
        <RebarDialog />
        <div className="pointer-events-none absolute top-[46px] left-[39px] z-30 h-[147px] w-[671px] border-x-[7px] border-y-8 border-[#ff0000]" />
        <button aria-label="关闭图片" className="absolute top-1.5 right-1.5 z-30 flex size-[41px] items-center justify-center rounded-full bg-[#333]">
          <svg viewBox="0 0 20 20" className="size-5"><path d="m1.500 1.500 17 17M18.500 1.500l-17 17" stroke="#fff" strokeWidth="2.500" strokeLinecap="round" /></svg>
        </button>
      </div>
    </div>
  );
}
